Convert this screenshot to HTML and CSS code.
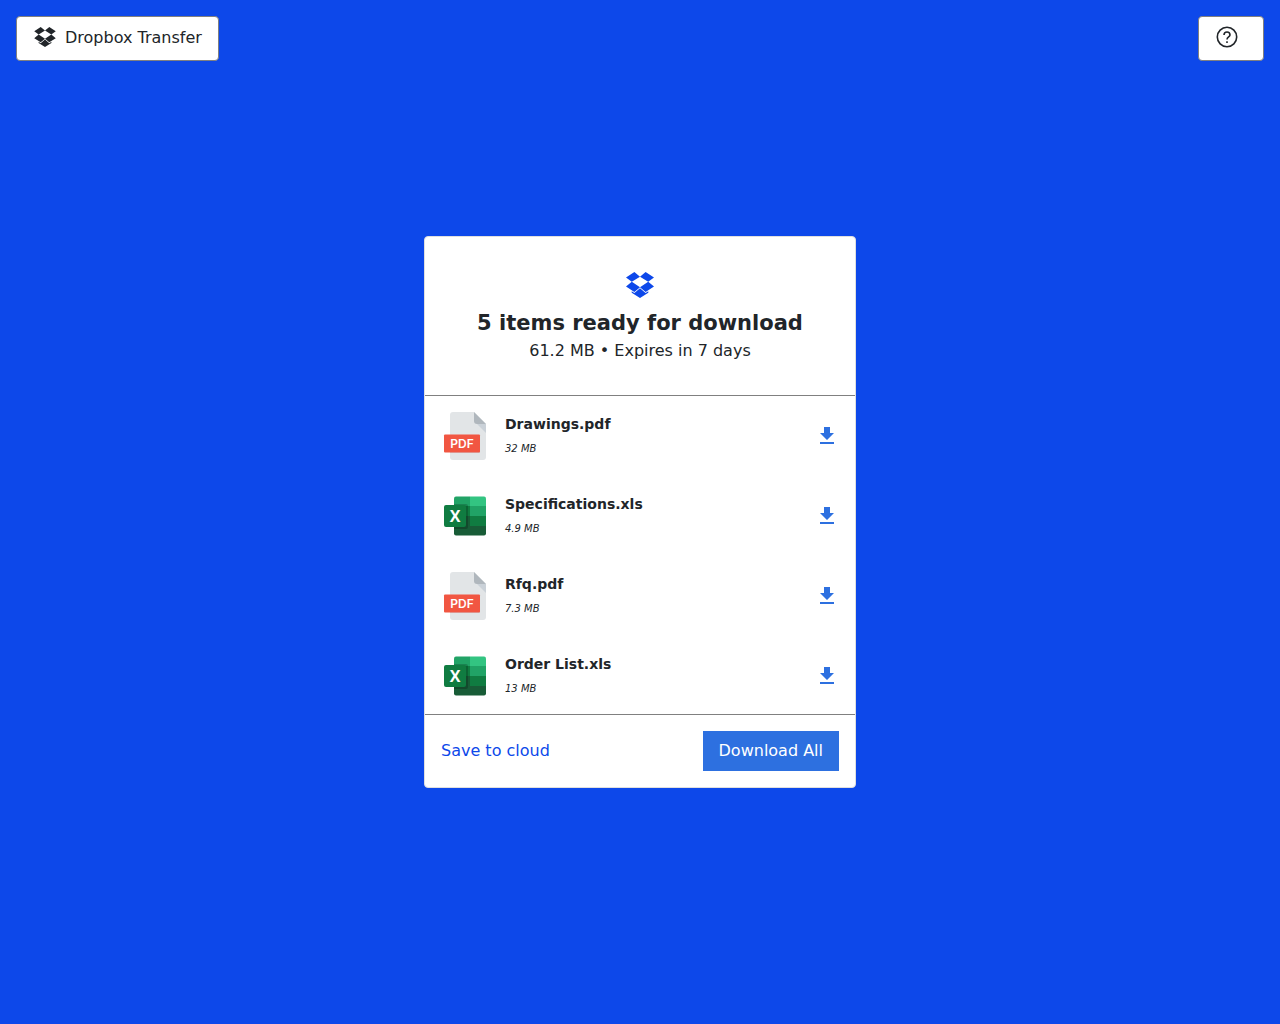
FILE: index.html
```html
<!DOCTYPE html>
<html lang="en">
<head>
    <meta charset="UTF-8">
    <meta name="viewport" content="width=device-width, initial-scale=1.0">
    <title>Dropbox Transfer</title>
    <link rel="stylesheet" href="styles.css">
</head>
<body>
    <!-- Shared icons -->
    <svg class="sprite" aria-hidden="true">
        <symbol id="dropbox" viewBox="0 0 28 26">
            <path d="M8.4 0 14 4.7 5.8 9.8 0 5.6zM19.6 0 28 5.6 22.2 9.8 14 4.7zM0 14.5 5.8 9.8 14 15.2 8.4 19.9zM28 14.5 22.2 9.8 14 15.2 19.6 19.9z"/>
            <path d="M14 16.3 19.6 21 22.3 19.2V20.8L14 26 5.7 20.8V19.2L8.4 21z"/>
        </symbol>
        <symbol id="download" viewBox="0 0 14 18">
            <path d="M4 0H10V6H14L7 13 0 6H4zM0 15H14V17H0z"/>
        </symbol>
        <symbol id="pdf" viewBox="0 0 48 48">
            <path fill="#e2e5e7" d="M12 0H33L45 12V45a3 3 0 0 1-3 3H12a3 3 0 0 1-3-3V3a3 3 0 0 1 3-3z"/>
            <path fill="#cad1d8" d="M36 12H45V21z"/>
            <path fill="#b0b7bd" d="M33 0 45 12H36a3 3 0 0 1-3-3z"/>
            <path fill="#cad1d8" d="M9 40H39V41H9z"/>
            <rect fill="#f15642" x="3" y="22.500" width="36" height="18" rx="1"/>
            <text class="pdf-label" x="21" y="36" text-anchor="middle">PDF</text>
        </symbol>
        <symbol id="xls" viewBox="0 0 48 48">
            <path fill="#21a366" d="M15 4.500H29V14H13V6.500a2 2 0 0 1 2-2z"/>
            <path fill="#33c481" d="M29 4.500H43a2 2 0 0 1 2 2V14H29z"/>
            <path fill="#107c41" d="M13 14H29V24H13z"/>
            <path fill="#21a366" d="M29 14H45V24H29z"/>
            <path fill="#185c37" d="M13 24H29V34H13z"/>
            <path fill="#107c41" d="M29 24H45V34H29z"/>
            <path fill="#185c37" d="M13 34H45V41.500a2 2 0 0 1-2 2H15a2 2 0 0 1-2-2z"/>
            <path fill="#000" fill-opacity=".2" d="M13 12H25a2 2 0 0 1 2 2V35a2 2 0 0 1-2 2H13z"/>
            <rect fill="#107c41" x="3" y="13" width="22" height="22" rx="2"/>
            <text class="xls-label" x="14" y="30" text-anchor="middle">X</text>
        </symbol>
    </svg>

    <!-- Top bar -->
    <header class="topbar">
        <button class="btn-top" type="button">
            <svg class="icon-top icon-brand" viewBox="0 0 24 24"><use href="#dropbox" x="1" y="1" width="22" height="20"/></svg>
            <span>Dropbox Transfer</span>
        </button>
        <button class="btn-top" type="button" aria-label="Help">
            <svg class="icon-top icon-help" viewBox="0 0 24 24">
                <circle cx="12" cy="11" r="9.7"/>
                <path d="M9 9a3 3 0 0 1 6 0c0 2-3 2-3 4.500"/>
                <path d="M12 15.200V17"/>
            </svg>
            <span></span>
        </button>
    </header>

    <!-- Transfer card -->
    <main class="content">
        <section class="card">
            <div class="card-head">
                <svg class="icon-logo"><use href="#dropbox"/></svg>
                <h1>5 items ready for download</h1>
                <p>61.2 MB • Expires in 7 days</p>
            </div>

            <ul class="file-list">
                <li class="file">
                    <svg class="file-icon"><use href="#pdf"/></svg>
                    <div class="file-info">
                        <strong>Drawings.pdf</strong>
                        <em>32 MB</em>
                    </div>
                    <button class="btn-download" type="button" aria-label="Download Drawings.pdf">
                        <svg><use href="#download"/></svg>
                    </button>
                </li>
                <li class="file">
                    <svg class="file-icon"><use href="#xls"/></svg>
                    <div class="file-info">
                        <strong>Specifications.xls</strong>
                        <em>4.9 MB</em>
                    </div>
                    <button class="btn-download" type="button" aria-label="Download Specifications.xls">
                        <svg><use href="#download"/></svg>
                    </button>
                </li>
                <li class="file">
                    <svg class="file-icon"><use href="#pdf"/></svg>
                    <div class="file-info">
                        <strong>Rfq.pdf</strong>
                        <em>7.3 MB</em>
                    </div>
                    <button class="btn-download" type="button" aria-label="Download Rfq.pdf">
                        <svg><use href="#download"/></svg>
                    </button>
                </li>
                <li class="file">
                    <svg class="file-icon"><use href="#xls"/></svg>
                    <div class="file-info">
                        <strong>Order List.xls</strong>
                        <em>13 MB</em>
                    </div>
                    <button class="btn-download" type="button" aria-label="Download Order List.xls">
                        <svg><use href="#download"/></svg>
                    </button>
                </li>
            </ul>

            <div class="card-foot">
                <a href="#" class="save-link">Save to cloud</a>
                <button class="btn-all" type="button">Download All</button>
            </div>
        </section>
    </main>
</body>
</html>
```

FILE: styles.css
```css
*, *::before, *::after {
    box-sizing: border-box;
    margin: 0;
    padding: 0;
}

body {
    display: flex;
    flex-direction: column;
    min-height: 100vh;
    background-color: #0d48ea;
    color: #212529;
    font-family: "DejaVu Sans", sans-serif;
    font-size: 16px;
    line-height: 24px;
}

button {
    font: inherit;
    color: inherit;
    cursor: pointer;
}

svg {
    display: block;
    flex: none;
}

.sprite {
    display: none;
}

/* Top bar */
.topbar {
    display: flex;
    justify-content: space-between;
    padding: 16px;
}

.btn-top {
    display: flex;
    align-items: center;
    gap: 8px;
    padding: 9px 16px 10px;
    background: white;
    border: 1px solid gray;
    border-radius: 4px;
}

.icon-top {
    width: 24px;
    height: 24px;
}

.icon-brand {
    fill: currentColor;
}

.icon-help {
    fill: none;
    stroke: currentColor;
    stroke-width: 1.6;
}

/* Card, centred in the window below the bar */
.content {
    flex: 1;
    display: flex;
    justify-content: center;
    align-items: center;
    padding: 0 16px 77px;
}

.card {
    width: 100%;
    max-width: 432px;
    background: white;
    border: 1px solid #dfdfdf;
    border-radius: 4px;
}

.card-head {
    display: flex;
    flex-direction: column;
    align-items: center;
    padding: 35px 16px 32px;
    border-bottom: 1px solid gray;
    text-align: center;
}

.icon-logo {
    width: 28px;
    height: 26px;
    margin-bottom: 13px;
    fill: #0d48ea;
}

h1 {
    font-size: 21px;
    line-height: 24px;
    margin-bottom: 4px;
}

/* File list */
.file-list {
    max-height: 318px;
    overflow: hidden;
    list-style: none;
}

.file {
    display: flex;
    align-items: center;
    gap: 16px;
    padding: 16px;
}

.file-icon {
    width: 48px;
    height: 48px;
}

.pdf-label {
    fill: white;
    font: 600 12px Inter, sans-serif;
}

.xls-label {
    fill: white;
    font: 700 16px "Open Sans", sans-serif;
}

.file-info {
    flex: 1;
    display: flex;
    flex-direction: column;
}

.file-info strong {
    font-size: 14px;
}

.file-info em {
    font-size: 10px;
    line-height: 26px;
    margin-bottom: -2px;
}

.btn-download {
    padding: 5px;
    background: none;
    border: none;
}

.btn-download svg {
    width: 14px;
    height: 18px;
    fill: #2d70e0;
}

/* Card footer */
.card-foot {
    display: flex;
    justify-content: space-between;
    align-items: center;
    padding: 16px;
    border-top: 1px solid gray;
}

.save-link {
    color: #0d48ea;
    text-decoration: none;
}

.btn-all {
    padding: 8px 16px;
    background: #2d70e0;
    border: none;
    color: white;
}
```
